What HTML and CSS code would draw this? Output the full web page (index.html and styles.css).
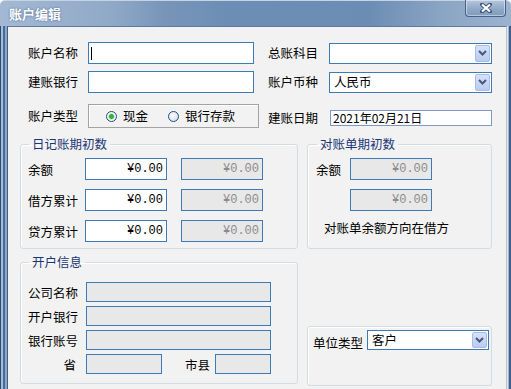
FILE: index.html
```html
<!DOCTYPE html>
<html lang="zh-CN">
<head>
  <meta charset="UTF-8" />
  <title>账户编辑</title>
  <link rel="stylesheet" href="styles.css">
</head>
<body>
  <div class="window">
    <div class="titlebar">
      <span class="title">账户编辑</span>
      <span class="close">
        <svg width="12" height="10" viewBox="0 0 12 10">
          <path d="M2 1.5 L10 8.5 M10 1.5 L2 8.5" stroke="#3b5579" stroke-width="4" stroke-linecap="round" fill="none"/>
          <path d="M2 1.5 L10 8.5 M10 1.5 L2 8.5" stroke="#fff" stroke-width="2.2" fill="none"/>
        </svg>
      </span>
    </div>
    <div class="frame">
      <div class="edge-left"></div>
      <div class="client">
        <div class="form-top">
          <div class="row">
            <span class="lbl">账户名称</span>
            <div class="field w-left"><span class="caret"></span></div>
            <span class="lbl lbl-right">总账科目</span>
            <div class="combo w-right">
              <span class="combo-text"></span>
              <span class="drop"><svg width="9" height="6" viewBox="0 0 9 6"><path d="M1 1 L4.5 4.5 L8 1" fill="none" stroke="#45597d" stroke-width="2"/></svg></span>
            </div>
          </div>
          <div class="row row-2">
            <span class="lbl">建账银行</span>
            <div class="field w-left"></div>
            <span class="lbl lbl-right">账户币种</span>
            <div class="combo w-right">
              <span class="combo-text">人民币</span>
              <span class="drop"><svg width="9" height="6" viewBox="0 0 9 6"><path d="M1 1 L4.5 4.5 L8 1" fill="none" stroke="#45597d" stroke-width="2"/></svg></span>
            </div>
          </div>
          <div class="row row-3">
            <span class="lbl">账户类型</span>
            <div class="radio-box">
              <span class="radio checked"></span><span class="radio-text">现金</span>
              <span class="radio second"></span><span class="radio-text">银行存款</span>
            </div>
            <span class="lbl lbl-date">建账日期</span>
            <div class="date-field">2021年02月21日</div>
          </div>
        </div>

        <div class="groups">
          <div class="col-left">
            <fieldset class="group g-journal">
              <legend>日记账期初数</legend>
              <div class="grow">
                <span class="glbl">余额</span>
                <div class="field money">¥0.00</div>
                <div class="field money off">¥0.00</div>
              </div>
              <div class="grow">
                <span class="glbl">借方累计</span>
                <div class="field money">¥0.00</div>
                <div class="field money off">¥0.00</div>
              </div>
              <div class="grow">
                <span class="glbl">贷方累计</span>
                <div class="field money">¥0.00</div>
                <div class="field money off">¥0.00</div>
              </div>
            </fieldset>

            <fieldset class="group g-bank">
              <legend>开户信息</legend>
              <div class="brow">
                <span class="blbl">公司名称</span>
                <div class="field off wide"></div>
              </div>
              <div class="brow">
                <span class="blbl">开户银行</span>
                <div class="field off wide"></div>
              </div>
              <div class="brow">
                <span class="blbl">银行账号</span>
                <div class="field off wide"></div>
              </div>
              <div class="brow">
                <span class="blbl short">省</span>
                <div class="field off prov"></div>
                <span class="city-lbl">市县</span>
                <div class="field off city"></div>
              </div>
            </fieldset>
          </div>

          <div class="col-right">
            <fieldset class="group g-statement">
              <legend>对账单期初数</legend>
              <div class="grow">
                <span class="slbl">余额</span>
                <div class="field money off">¥0.00</div>
              </div>
              <div class="grow">
                <span class="slbl"></span>
                <div class="field money off">¥0.00</div>
              </div>
              <div class="note">对账单余额方向在借方</div>
            </fieldset>

            <div class="group g-unit">
              <span class="ulbl">单位类型</span>
              <div class="combo w-unit">
                <span class="combo-text">客户</span>
                <span class="drop"><svg width="9" height="6" viewBox="0 0 9 6"><path d="M1 1 L4.5 4.5 L8 1" fill="none" stroke="#45597d" stroke-width="2"/></svg></span>
              </div>
            </div>
          </div>
        </div>
      </div>
      <div class="edge-right"></div>
    </div>
  </div>
</body>
</html>
```

FILE: styles.css
```css
* {
  box-sizing: border-box;
}
body {
  margin: 0;
  font-family: "Noto Sans CJK SC", "Liberation Sans", sans-serif;
  font-size: 12.5px;
  color: #000;
  background: #fff;
}
.window {
  width: 511px;
  height: 389px;
  overflow: hidden;
  display: flex;
  flex-direction: column;
}
.titlebar {
  height: 26px;
  flex: none;
  display: flex;
  justify-content: space-between;
  align-items: flex-start;
  padding: 0 5px 0 9px;
  border-top: 1px solid #c5d3e4;
  border-radius: 5px 5px 0 0;
  background: linear-gradient(to right, #a3b9d3 0%, #90a9c7 22%, #7895b9 32%, #6c8eb4 45%, #6b8db3 72%, #8aa4c3 86%, #9cb3cd 100%);
}
.title {
  color: #fff;
  font-weight: bold;
  font-size: 13px;
  line-height: 14px;
  margin-top: 6px;
  text-shadow: 0 0 2px #3d5b82;
}
.close {
  width: 41px;
  height: 17px;
  margin-top: -1px;
  display: flex;
  align-items: center;
  justify-content: center;
  border: 1px solid #45628a;
  border-top: none;
  border-radius: 0 0 4px 4px;
  background: linear-gradient(to bottom, #b4c6dc, #8ea7c6 60%, #7e9abd);
  box-shadow: inset 0 0 0 1px rgba(255, 255, 255, 0.45);
}
.frame {
  flex: 1;
  display: flex;
}
.edge-left {
  width: 7px;
  background: linear-gradient(to right, #2f4b72 0 1px, #a6bdd9 1px 3px, #4a6b98 3px 5px, #8ca8c9 5px 7px);
}
.client {
  width: 500px;
  background: #f2f2f2;
  border-left: 1px solid #3f5f8a;
  border-top: 1px solid #5d7aa0;
  border-right: 1px solid #b9c4d1;
}
.edge-right {
  flex: 1;
  background: linear-gradient(to right, #dfe6ee 0 1px, #9fb5cf 1px 2px, #3e5d88 2px);
}

/* top form */
.form-top {
  padding: 15px 0 0 20px;
}
.row {
  display: flex;
  align-items: center;
  height: 22px;
}
.row-2 {
  margin-top: 7px;
}
.row-3 {
  margin-top: 11px;
  height: 24px;
}
.lbl {
  width: 60px;
  line-height: 14px;
}
.lbl-right {
  width: 61px;
  margin-left: 14px;
}
.lbl-date {
  width: 62px;
  margin-left: 9px;
  margin-top: 3px;
}
.field {
  height: 22px;
  background: #fff;
  border: 1px solid #3d7ab8;
  display: flex;
  align-items: center;
}
.w-left {
  width: 166px;
}
.caret {
  width: 1px;
  height: 13px;
  margin-left: 2px;
  background: #000;
}
.combo {
  height: 21px;
  background: #fff;
  border: 1px solid #3d7ab8;
  display: flex;
  align-items: center;
  justify-content: space-between;
  padding: 1px;
}
.w-right {
  width: 163px;
}
.combo-text {
  padding-left: 3px;
  line-height: 14px;
}
.drop {
  width: 15px;
  height: 17px;
  display: flex;
  align-items: center;
  justify-content: center;
  border: 1px solid #a9bde3;
  border-radius: 2px;
  background: linear-gradient(to bottom, #d6e2f8, #b9cbf0);
}
.radio-box {
  width: 171px;
  height: 24px;
  display: flex;
  align-items: center;
  padding-left: 17px;
  border: 1px solid #a3a3a3;
  box-shadow: inset 1px 1px 0 #fff;
}
.radio {
  width: 11px;
  height: 11px;
  border-radius: 50%;
  border: 1px solid #1d4f82;
  background: radial-gradient(circle at 40% 40%, #fff, #cdd6e2);
}
.radio.checked {
  background: radial-gradient(circle, #35b035 0 2px, #8fd48f 2.5px, #fff 3.5px, #cdd6e2 100%);
}
.radio.second {
  margin-left: 20px;
}
.radio-text {
  margin-left: 6px;
  line-height: 14px;
}
.date-field {
  width: 162px;
  height: 16px;
  margin-top: 3px;
  background: #fff;
  border: 1px solid #7f97c9;
  padding-left: 2px;
  font-size: 12px;
  line-height: 14px;
}

/* groups */
.groups {
  display: flex;
  gap: 9px;
  margin-top: 9px;
  padding-left: 12px;
}
.col-left {
  width: 278px;
  display: flex;
  flex-direction: column;
  gap: 6px;
}
.col-right {
  width: 185px;
  display: flex;
  flex-direction: column;
}
.group {
  margin: 0;
  border: 1px solid #d3dbe3;
  border-radius: 3px;
  box-shadow: inset 1px 1px 0 #fff;
  min-width: 0;
}
legend {
  margin-left: 1px;
  padding: 0 3px;
  line-height: 14px;
  color: #1b3675;
}
.g-journal {
  padding: 7px 0 6px 7px;
  display: flex;
  flex-direction: column;
  gap: 9px;
}
.grow {
  display: flex;
  align-items: center;
  height: 22px;
}
.glbl {
  width: 57px;
}
.money {
  width: 82px;
  justify-content: flex-end;
  padding-right: 3px;
  font-family: "Liberation Mono", "Noto Sans CJK SC", monospace;
  font-size: 12px;
}
.money + .money {
  margin-left: 14px;
}
.off {
  background: #e8e8e8;
  color: #8c8c8c;
}
.g-statement {
  padding: 7px 0 13px 8px;
  display: flex;
  flex-direction: column;
  gap: 9px;
}
.slbl {
  width: 34px;
}
.note {
  margin: 1px 0 0 8px;
  line-height: 14px;
}
.g-bank {
  padding: 13px 0 9px 7px;
  display: flex;
  flex-direction: column;
  gap: 4px;
}
.brow {
  display: flex;
  align-items: center;
  height: 20px;
}
.brow .field {
  height: 20px;
}
.blbl {
  width: 58px;
}
.blbl.short {
  text-align: right;
  padding-right: 10px;
}
.wide {
  width: 185px;
}
.prov {
  width: 76px;
}
.city-lbl {
  margin-left: 23px;
  width: 30px;
}
.city {
  width: 56px;
}
.g-unit {
  margin-top: 77px;
  height: 60px;
  padding: 3px 0 0 5px;
  display: flex;
  align-items: flex-start;
}
.ulbl {
  width: 54px;
  margin-top: 3px;
}
.w-unit {
  width: 122px;
  height: 20px;
}
.w-unit .drop {
  height: 16px;
}
```
